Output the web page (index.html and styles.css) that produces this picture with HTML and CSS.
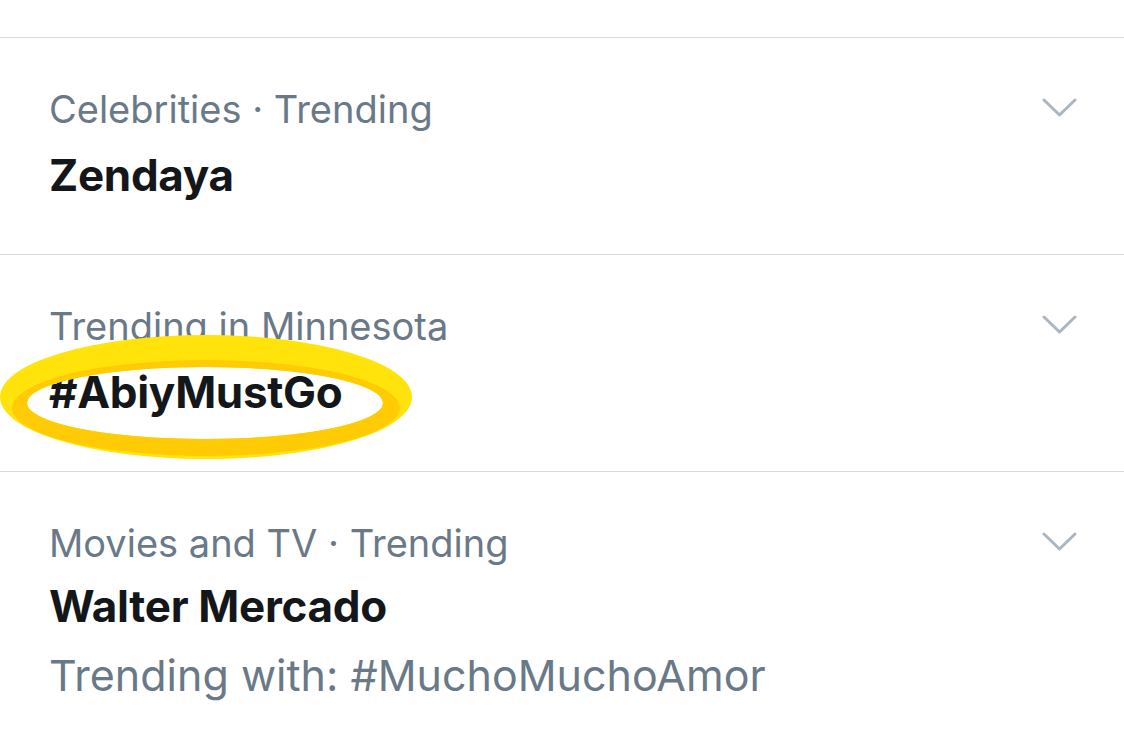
FILE: index.html
```html
<!DOCTYPE html>
<html lang="en">
<head>
    <meta charset="UTF-8">
    <meta name="viewport" content="width=device-width, initial-scale=1.0">
    <title>Trends for you</title>
    <link rel="stylesheet" href="styles.css">
</head>
<body>
    <div class="trends">
        <div class="trend-tail"></div>

        <div class="trend">
            <div class="trend-body">
                <div class="trend-meta">Celebrities · Trending</div>
                <div class="trend-name">Zendaya</div>
            </div>
            <svg class="chevron" width="36" height="20" viewBox="0 0 36 20">
                <path d="M2 2 L17.5 17 L33 2" />
            </svg>
        </div>

        <div class="trend">
            <div class="trend-body">
                <div class="trend-meta">Trending in Minnesota</div>
                <div class="trend-name">#AbiyMustGo</div>
            </div>
            <svg class="chevron" width="36" height="20" viewBox="0 0 36 20">
                <path d="M2 2 L17.5 17 L33 2" />
            </svg>
            <!-- marker ring drawn round the hashtag -->
            <svg class="ring" width="414" height="130" viewBox="0 0 414 130">
                <path class="ring-light" fill-rule="evenodd"
                      d="M0 62 A206 62 0 1 0 412 62 A206 62 0 1 0 0 62 Z
                         M27 68 A178 36 0 1 0 383 68 A178 36 0 1 0 27 68 Z" />
                <path class="ring-dark" fill-rule="evenodd"
                      d="M12 73 A194 48 0 1 0 400 73 A194 48 0 1 0 12 73 Z
                         M27 68 A178 36 0 1 0 383 68 A178 36 0 1 0 27 68 Z" />
            </svg>
        </div>

        <div class="trend">
            <div class="trend-body">
                <div class="trend-meta">Movies and TV · Trending</div>
                <div class="trend-name tight">Walter Mercado</div>
                <div class="trend-with">Trending with: #MuchoMuchoAmor</div>
            </div>
            <svg class="chevron" width="36" height="20" viewBox="0 0 36 20">
                <path d="M2 2 L17.5 17 L33 2" />
            </svg>
        </div>
    </div>
</body>
</html>
```

FILE: styles.css
```css
body {
    margin: 0;
    background-color: #fff;
    font-family: Inter, "Noto Sans", sans-serif;
    overflow: hidden;
}

.trend-tail {
    height: 37px;
}

.trend {
    position: relative;
    display: flex;
    justify-content: space-between;
    align-items: flex-start;
    height: 217px;
    padding: 48px 46px 0 49px;
    box-sizing: border-box;
    border-top: 1px solid #d6dce1;
}

.trend:last-child {
    height: 260px;
}

.trend-meta {
    font-size: 38px;
    line-height: 46px;
    color: #697987;
}

.trend-name {
    margin-top: 13px;
    font-size: 44px;
    font-weight: 700;
    line-height: 60px;
    color: #14171a;
    letter-spacing: -0.3px;
}

.trend-name.tight {
    margin-top: 10px;
}

.trend-with {
    margin-top: 9px;
    font-size: 43px;
    line-height: 60px;
    color: #697987;
}

.chevron {
    margin-top: 12px;
    flex-shrink: 0;
}

.chevron path {
    fill: none;
    stroke: #aab6c0;
    stroke-width: 3;
    stroke-linecap: round;
    stroke-linejoin: round;
}

.ring {
    position: absolute;
    left: 0;
    top: 80px;
}

.ring-light {
    fill: #ffe30a;
}

.ring-dark {
    fill: #ffcb05;
}
```
